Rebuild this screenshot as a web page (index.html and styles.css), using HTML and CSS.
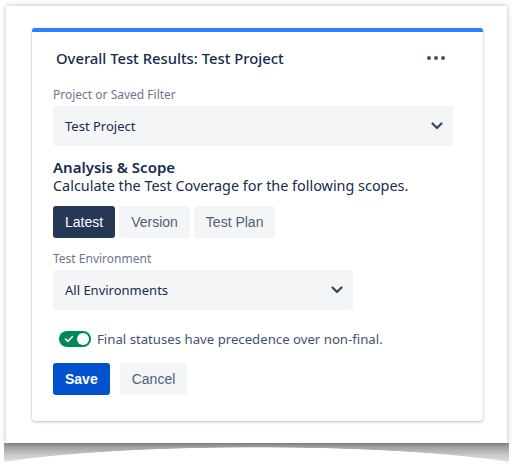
FILE: index.html
```html
<!DOCTYPE html>
<html lang="en">

<head>
    <meta charset="UTF-8">
    <meta name="viewport" content="width=device-width, initial-scale=1.0">
    <title>Overall Test Results</title>
    <link rel="stylesheet" href="styles.css">
</head>

<body>
    <div class="frame">
        <div class="card">
            <div class="card-header">
                <h2 class="card-title">Overall Test Results: Test Project</h2>
                <button class="more" aria-label="More">
                    <svg width="18" height="4" viewBox="0 0 18 4">
                        <circle cx="2" cy="2" r="2" />
                        <circle cx="9" cy="2" r="2" />
                        <circle cx="16" cy="2" r="2" />
                    </svg>
                </button>
            </div>

            <label class="field-label">Project or Saved Filter</label>
            <div class="select select-wide">
                <span>Test Project</span>
                <svg class="chevron" width="12" height="8" viewBox="0 0 12 8">
                    <path d="M1.5 1.5 L6 6 L10.5 1.5" />
                </svg>
            </div>

            <h3 class="section-title">Analysis &amp; Scope</h3>
            <p class="section-desc">Calculate the Test Coverage for the following scopes.</p>

            <div class="scope-group">
                <button class="btn btn-selected">Latest</button>
                <button class="btn">Version</button>
                <button class="btn">Test Plan</button>
            </div>

            <label class="field-label env-label">Test Environment</label>
            <div class="select select-narrow">
                <span>All Environments</span>
                <svg class="chevron" width="12" height="8" viewBox="0 0 12 8">
                    <path d="M1.5 1.5 L6 6 L10.5 1.5" />
                </svg>
            </div>

            <div class="toggle-row">
                <span class="toggle">
                    <svg class="check" width="10" height="8" viewBox="0 0 10 8">
                        <path d="M1.5 4 L4 6.3 L8.5 1.5" />
                    </svg>
                    <span class="knob"></span>
                </span>
                <span class="toggle-text">Final statuses have precedence over non-final.</span>
            </div>

            <div class="actions">
                <button class="btn btn-primary">Save</button>
                <button class="btn">Cancel</button>
            </div>
        </div>
    </div>
    <div class="curl"></div>
</body>

</html>
```

FILE: styles.css
```css
body {
    margin: 0;
    padding: 6px 0 0 6px;
    background-color: #FFFFFF;
    font-family: "Noto Sans", "Open Sans", sans-serif;
    color: #172B4D;
}

.frame {
    width: 501px;
    height: 437px;
    box-sizing: border-box;
    padding: 22px 24px 0 26px;
    background-color: #FFFFFF;
    box-shadow: 0 0 5px rgba(0, 0, 0, 0.28);
    position: relative;
    z-index: 1;
}

.curl {
    width: 505px;
    height: 20px;
    margin-left: -2px;
    background:
        radial-gradient(ellipse 310px 34px at 50% 38px, #FFFFFF 98%, rgba(255, 255, 255, 0) 100%),
        linear-gradient(to bottom, #8E8E8E, #C8C8C8 60%, #E4E4E4);
}

.card {
    width: 451px;
    box-sizing: border-box;
    padding: 0 21px 26px 21px;
    background-color: #FFFFFF;
    border-top: 4px solid #2684FF;
    border-radius: 3px;
    box-shadow: 0 1px 3px rgba(9, 30, 66, 0.28), 0 0 1px rgba(9, 30, 66, 0.2);
}

.card-header {
    width: 400px;
    height: 52px;
    display: flex;
    align-items: center;
    justify-content: space-between;
}

.card-title {
    margin: 0 0 0 3px;
    font-size: 14.8px;
    font-weight: 500;
    color: #172B4D;
}

.more {
    margin-right: 8px;
    padding: 0;
    border: none;
    background: none;
    display: flex;
    fill: #42526E;
}

.field-label {
    display: block;
    margin-top: 3px;
    font-size: 12px;
    line-height: 16px;
    font-weight: 400;
    color: #6B778C;
}

.select {
    margin-top: 3px;
    height: 40px;
    box-sizing: border-box;
    padding: 0 10px 0 12px;
    display: flex;
    align-items: center;
    justify-content: space-between;
    background-color: #F4F5F7;
    border-radius: 3px;
    font-size: 13px;
    color: #172B4D;
}

.select-wide {
    width: 400px;
}

.select-narrow {
    width: 300px;
}

.chevron {
    fill: none;
    stroke: #344563;
    stroke-width: 2.2;
    stroke-linecap: round;
    stroke-linejoin: round;
}

.section-title {
    margin: 11px 0 0 0;
    font-size: 15px;
    line-height: 20px;
    font-weight: 600;
    color: #172B4D;
}

.section-desc {
    margin: 0;
    font-size: 14.4px;
    line-height: 18px;
    color: #172B4D;
}

.scope-group {
    margin-top: 11px;
    display: flex;
    gap: 4px;
}

.btn {
    height: 32px;
    padding: 0 12px;
    border: none;
    border-radius: 3px;
    background-color: #F4F5F7;
    color: #505F79;
    font-family: "Liberation Sans", Arial, sans-serif;
    font-size: 14px;
    cursor: pointer;
}

.btn-selected {
    background-color: #253858;
    color: #FFFFFF;
}

.btn-primary {
    background-color: #0052CC;
    color: #FFFFFF;
    font-weight: bold;
}

.env-label {
    margin-top: 13px;
}

.toggle-row {
    margin-top: 19px;
    padding-left: 6px;
    height: 20px;
    display: flex;
    align-items: center;
    gap: 6px;
}

.toggle {
    width: 32px;
    height: 16px;
    box-sizing: border-box;
    padding: 0 2px 0 5px;
    border-radius: 8px;
    background-color: #00875A;
    display: flex;
    align-items: center;
    justify-content: space-between;
}

.check {
    fill: none;
    stroke: #FFFFFF;
    stroke-width: 1.6;
    stroke-linecap: round;
    stroke-linejoin: round;
}

.knob {
    width: 12px;
    height: 12px;
    border-radius: 50%;
    background-color: #FFFFFF;
}

.toggle-text {
    font-size: 13.2px;
    color: #42526E;
}

.actions {
    margin-top: 14px;
    display: flex;
    gap: 10px;
}
```
